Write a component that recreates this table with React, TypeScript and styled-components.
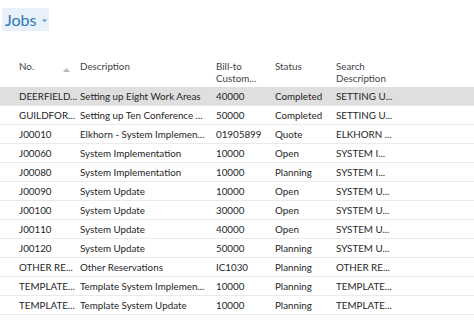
import React from 'react'
import styled, { createGlobalStyle } from 'styled-components'

const GlobalStyle = createGlobalStyle`
  html, body {
    margin: 0;
    padding: 0;
    background: #ffffff;
  }
  body {
    font-family: Lato, "Open Sans", sans-serif;
    color: #262626;
  }
`

const Page = styled.div`
  width: 474px;
  height: 321px;
  overflow: hidden;
  background: #ffffff;
`

const TitleBar = styled.div`
  display: flex;
  padding-top: 8px;
  padding-left: 2px;
  height: 59px;
  box-sizing: border-box;
`

const Title = styled.div`
  display: inline-flex;
  align-items: center;
  gap: 6px;
  height: 23px;
  width: 47px;
  box-sizing: border-box;
  padding: 0 0 0 3px;
  background: #e8f1f9;
  color: #2b78b8;
  font-size: 16px;
  .caret {
    width: 5px;
    height: 5px;
    color: #5a8fc0;
    margin-top: 1px;
  }
`

const Grid = styled.div`
  display: grid;
  grid-template-columns: 80px 136px 59px 61px 1fr;
  font-size: 9.8px;
`

const HeaderCell = styled.div<{ $first?: boolean }>`
  position: relative;
  height: 28px;
  box-sizing: border-box;
  padding-top: 1px;
  padding-left: ${props => (props.$first ? '19px' : '0')};
  color: #444444;
  line-height: 12px;
  .arrow {
    position: absolute;
    left: 63px;
    top: 9px;
    width: 7px;
    height: 4px;
  }
`

const Row = styled.div<{ $selected?: boolean }>`
  display: contents;
  & > div {
    background: ${props => (props.$selected ? '#dfdfdf' : '#ffffff')};
  }
`

const Cell = styled.div<{ $first?: boolean }>`
  height: 19px;
  line-height: 18px;
  box-sizing: border-box;
  border-bottom: 1px solid #eaeaea;
  padding-left: ${props => (props.$first ? '19px' : '0')};
  white-space: nowrap;
  overflow: hidden;
  color: #262626;
`

interface IJob {
  no: string,
  description: string,
  billTo: string,
  status: string,
  search: string
}

const jobs: IJob[] = [
  { no: 'DEERFIELD...', description: 'Setting up Eight Work Areas', billTo: '40000', status: 'Completed', search: 'SETTING U...' },
  { no: 'GUILDFOR...', description: 'Setting up Ten Conference ...', billTo: '50000', status: 'Completed', search: 'SETTING U...' },
  { no: 'J00010', description: 'Elkhorn - System Implemen...', billTo: '01905899', status: 'Quote', search: 'ELKHORN ...' },
  { no: 'J00060', description: 'System Implementation', billTo: '10000', status: 'Open', search: 'SYSTEM I...' },
  { no: 'J00080', description: 'System Implementation', billTo: '10000', status: 'Planning', search: 'SYSTEM I...' },
  { no: 'J00090', description: 'System Update', billTo: '10000', status: 'Open', search: 'SYSTEM U...' },
  { no: 'J00100', description: 'System Update', billTo: '30000', status: 'Open', search: 'SYSTEM U...' },
  { no: 'J00110', description: 'System Update', billTo: '40000', status: 'Open', search: 'SYSTEM U...' },
  { no: 'J00120', description: 'System Update', billTo: '50000', status: 'Planning', search: 'SYSTEM U...' },
  { no: 'OTHER RE...', description: 'Other Reservations', billTo: 'IC1030', status: 'Planning', search: 'OTHER RE...' },
  { no: 'TEMPLATE...', description: 'Template System Implemen...', billTo: '10000', status: 'Planning', search: 'TEMPLATE...' },
  { no: 'TEMPLATE...', description: 'Template System Update', billTo: '10000', status: 'Planning', search: 'TEMPLATE...' }
]

const App: React.FunctionComponent = () => {
  return (
    <Page>
      <GlobalStyle />
      <TitleBar>
        <Title>
          <span>Jobs</span>
          <svg className="caret" viewBox="0 0 5 5">
            <path d="M0 1.5 L5 1.5 L2.5 4 Z" fill="currentColor" />
          </svg>
        </Title>
      </TitleBar>
      <Grid>
        <HeaderCell $first>
          No.
          <svg className="arrow" viewBox="0 0 7 4">
            <path d="M0 4 L3.5 0 L7 4 Z" fill="#b8b8b8" />
          </svg>
        </HeaderCell>
        <HeaderCell>Description</HeaderCell>
        <HeaderCell>Bill-to<br />Custom...</HeaderCell>
        <HeaderCell>Status</HeaderCell>
        <HeaderCell>Search<br />Description</HeaderCell>
        {jobs.map((job, i) => (
          <Row key={i} $selected={i === 0}>
            <Cell $first>{job.no}</Cell>
            <Cell>{job.description}</Cell>
            <Cell>{job.billTo}</Cell>
            <Cell>{job.status}</Cell>
            <Cell>{job.search}</Cell>
          </Row>
        ))}
      </Grid>
    </Page>
  )
}

export default App
